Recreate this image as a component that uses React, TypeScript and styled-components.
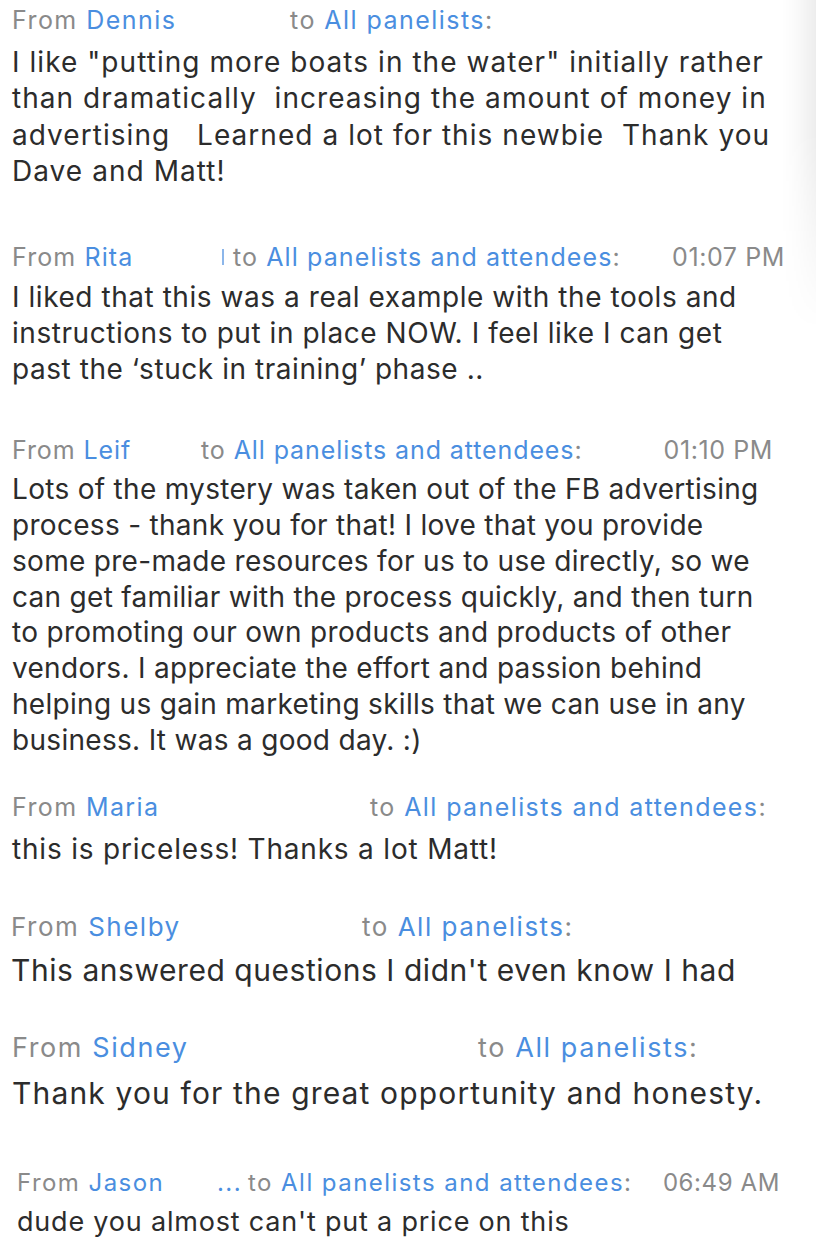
import styled, { createGlobalStyle } from "styled-components";

type Msg = {
  from: string;
  to: string;
  text: string;
  time?: string;
  toX: number; // x where "to" starts
  top: number; // space above the block
  gap: number; // space between header and body
  left?: number;
  timeRight?: number;
  head: [number, number]; // font size, tracking
  body: [number, number];
  lh?: number;
  mark?: boolean;
  dots?: boolean;
};

const messages: Msg[] = [
  {
    from: "Dennis",
    to: "All panelists",
    text:
      'I like "putting more boats in the water" initially rather\nthan dramatically  increasing the amount of money in\nadvertising   Learned a lot for this newbie  Thank you\nDave and Matt!',
    toX: 290,
    top: 0,
    gap: 8,
    head: [25, 1.45],
    body: [28, 1.05],
  },
  {
    from: "Rita",
    to: "All panelists and attendees",
    text:
      "I liked that this was a real example with the tools and\ninstructions to put in place NOW. I feel like I can get\npast the \u2018stuck in training\u2019 phase ..",
    time: "01:07 PM",
    timeRight: 31,
    toX: 233,
    top: 47,
    gap: 6,
    head: [25, 1.1],
    body: [28, 0.55],
    mark: true,
  },
  {
    from: "Leif",
    to: "All panelists and attendees",
    text:
      "Lots of the mystery was taken out of the FB advertising\nprocess - thank you for that! I love that you provide\nsome pre-made resources for us to use directly, so we\ncan get familiar with the process quickly, and then turn\nto promoting our own products and products of other\nvendors. I appreciate the effort and passion behind\nhelping us gain marketing skills that we can use in any\nbusiness. It was a good day. :)",
    time: "01:10 PM",
    timeRight: 43,
    toX: 201,
    top: 42,
    gap: 6,
    head: [25, 0.9],
    body: [28, 0.3],
    lh: 35.9,
  },
  {
    from: "Maria",
    to: "All panelists and attendees",
    text: "this is priceless! Thanks a lot Matt!",
    toX: 370,
    top: 28,
    gap: 8,
    head: [25, 1.4],
    body: [28, 0.8],
  },
  {
    from: "Shelby",
    to: "All panelists",
    text: "This answered questions I didn't even know I had",
    toX: 362,
    top: 39,
    gap: 9,
    left: 11,
    head: [26, 1.5],
    body: [30, 0.55],
  },
  {
    from: "Sidney",
    to: "All panelists",
    text: "Thank you for the great opportunity and honesty.",
    toX: 478,
    top: 40,
    gap: 11,
    head: [27, 1.6],
    body: [30, 1.15],
  },
  {
    from: "Jason",
    to: "All panelists and attendees",
    text: "dude you almost can't put a price on this",
    time: "06:49 AM",
    timeRight: 36,
    toX: 217,
    top: 51,
    gap: 6,
    left: 17,
    head: [24, 1.45],
    body: [27, 0.8],
    dots: true,
  },
];

const GlobalStyle = createGlobalStyle`
  html, body {
    margin: 0;
    padding: 0;
    background: #ffffff;
  }
  body {
    font-family: Inter, "Liberation Sans", Arial, sans-serif;
    -webkit-font-smoothing: antialiased;
  }
`;

const Page = styled.div`
  position: relative;
  width: 816px;
  height: 1258px;
  overflow: hidden;
  background: #ffffff;

  &::after {
    content: "";
    position: absolute;
    top: 0;
    right: 0;
    width: 34px;
    height: 330px;
    background: linear-gradient(
      to left,
      rgba(0, 0, 0, 0.07),
      rgba(0, 0, 0, 0.02) 60%,
      rgba(0, 0, 0, 0)
    );
    -webkit-mask-image: linear-gradient(to bottom, #000 40%, transparent);
    mask-image: linear-gradient(to bottom, #000 40%, transparent);
    pointer-events: none;
  }
`;

const Block = styled.div<{ $top: number; $left: number }>`
  margin-top: ${(p) => p.$top}px;
  padding: 4px 0 0 ${(p) => p.$left}px;
`;

const Header = styled.div<{ $size: number; $track: number; $right: number }>`
  display: flex;
  align-items: center;
  height: 32px;
  padding-right: ${(p) => p.$right}px;
  font-size: ${(p) => p.$size}px;
  letter-spacing: ${(p) => p.$track}px;
  color: #8a8a8a;
  white-space: nowrap;
`;

const Sender = styled.div<{ $width: number }>`
  display: flex;
  align-items: center;
  flex: none;
  width: ${(p) => p.$width}px;
`;

const Blue = styled.span`
  color: #4a8ee0;
`;

const Mark = styled.span`
  margin-left: auto;
  margin-right: 9px;
  width: 2px;
  height: 16px;
  background: #8cb6ea;
`;

const Dots = styled.span`
  margin-left: auto;
  color: #4a8ee0;
  margin-right: 6px;
`;

const Time = styled.span`
  margin-left: auto;
  letter-spacing: 0.6px;
`;

const Body = styled.div<{ $size: number; $track: number; $gap: number; $lh: number }>`
  margin-top: ${(p) => p.$gap}px;
  font-size: ${(p) => p.$size}px;
  line-height: ${(p) => p.$lh}px;
  letter-spacing: ${(p) => p.$track}px;
  color: #2c2c2c;
  white-space: pre-wrap;
`;

export default function App() {
  return (
    <>
      <GlobalStyle />
      <Page>
        {messages.map((m) => {
          const left = m.left ?? 12;
          return (
            <Block key={m.from} $top={m.top} $left={left}>
              <Header $size={m.head[0]} $track={m.head[1]} $right={m.timeRight ?? 0}>
                <Sender $width={m.toX - left + (m.dots ? 31 : 0)}>
                  From&nbsp;<Blue>{m.from}</Blue>
                  {m.mark && <Mark />}
                  {m.dots && <Dots>...</Dots>}
                </Sender>
                to&nbsp;<Blue>{m.to}</Blue>:
                {m.time && <Time>{m.time}</Time>}
              </Header>
              <Body
                $size={m.body[0]}
                $track={m.body[1]}
                $gap={m.gap}
                $lh={m.lh ?? 36.4}
              >
                {m.text}
              </Body>
            </Block>
          );
        })}
      </Page>
    </>
  );
}
